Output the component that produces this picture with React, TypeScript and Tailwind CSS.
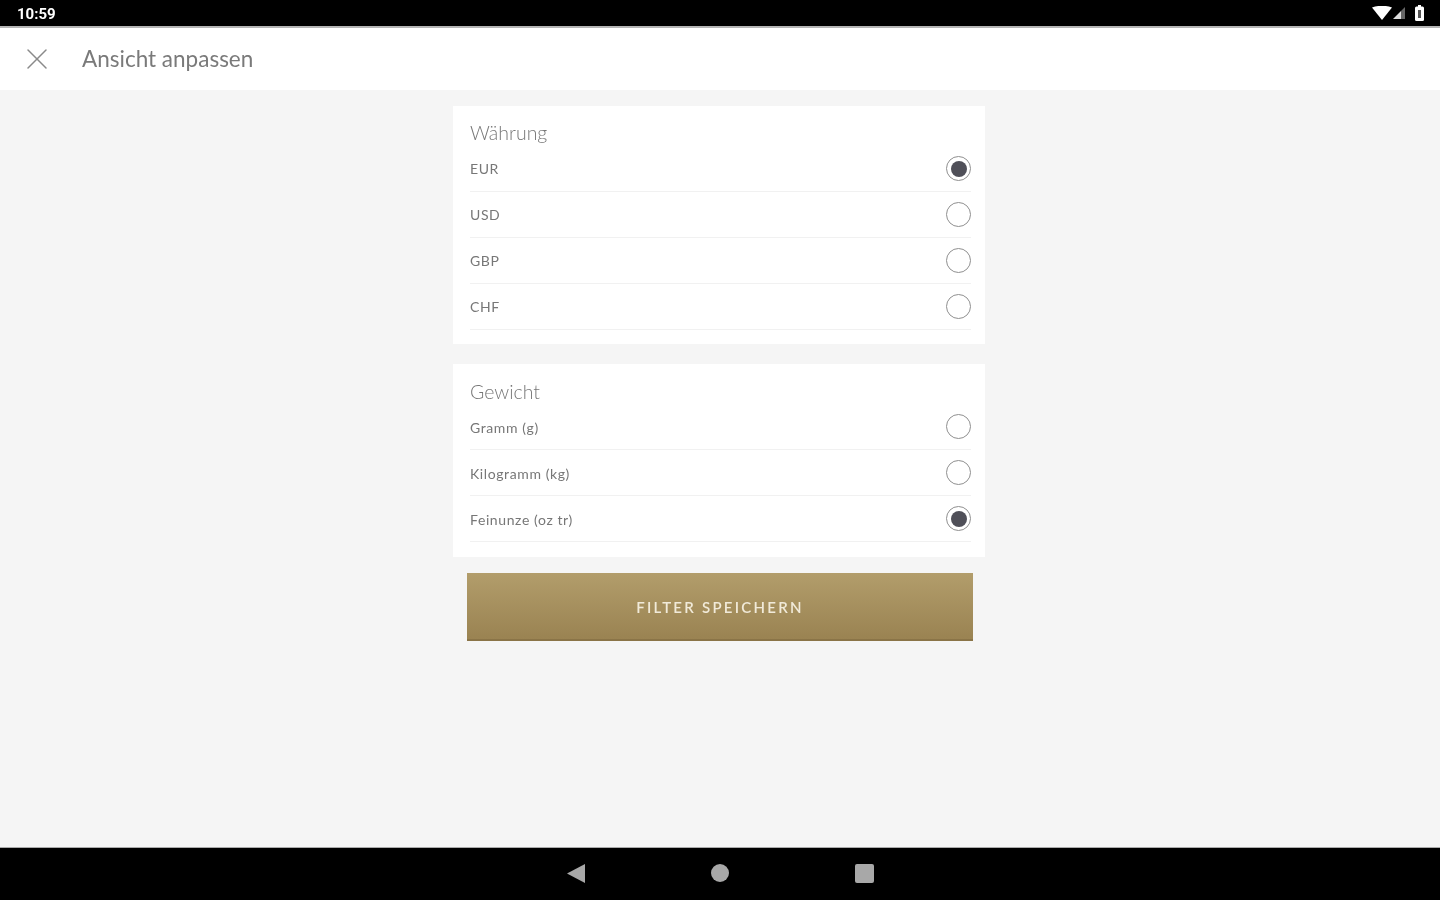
import React from 'react';
import { X } from 'lucide-react';

const Radio = ({ checked }: { checked?: boolean }) => (
    <div className="flex h-[25px] w-[25px] items-center justify-center rounded-full border-[1.5px] border-[#8f8f8f] blur-[0.3px]">
        {checked && <div className="h-[16px] w-[16px] rounded-full bg-[#4f4f58]" />}
    </div>
);

const Row = ({ label, checked, low }: { label: string; checked?: boolean; low?: boolean }) => (
    <div className="flex h-[46px] items-center justify-between border-b border-[#f1f1f1]">
        <span className={`text-[14px] tracking-[0.6px] text-[#777777] blur-[0.5px] ${low ? 'pt-[2px]' : ''}`}>{label}</span>
        <Radio checked={checked} />
    </div>
);

const Section = ({ title, rows, selected, last }: { title: string; rows: string[]; selected: string; last?: boolean }) => (
    <div className={`mr-[2px] w-[532px] bg-white pl-[17px] pr-[14px] ${last ? 'pb-[15px]' : 'pb-[14px]'}`}>
        <div className="flex h-[40px] items-end text-[19.5px] leading-[28px] font-light text-[#777777] blur-[0.5px]">
            <span className={last ? 'relative top-[2px]' : 'relative top-[1px]'}>{title}</span>
        </div>
        {rows.map((r) => (
            <Row key={r} label={r} checked={r === selected} low={last} />
        ))}
    </div>
);

const App: React.FC = () => {
    return (
        <div className="flex h-[900px] w-[1440px] flex-col overflow-hidden bg-[#f5f5f5] font-['Lato',sans-serif]">
            {/* Status bar */}
            <div className="flex h-[26px] items-center justify-between bg-black pl-[17px] pr-[16px]">
                <span className="relative top-[1px] font-['Roboto',sans-serif] text-[15px] font-bold text-white blur-[0.4px]">10:59</span>
                <div className="flex items-center gap-[1px] blur-[0.4px]">
                    <svg width="20" height="14" viewBox="0 0 20 14"><path d="M0 1.5 Q10 -2 20 1.5 L10 14 Z" fill="#fff" /></svg>
                    <svg width="13" height="12" viewBox="0 0 13 12"><path d="M0 12 L8 4 V12 Z" fill="#ddd" /><path d="M8 4 L12 0 V12 H8 Z" fill="#666" /></svg>
                    <svg className="ml-[8px]" width="9" height="16" viewBox="0 0 9 16"><rect x="0" y="1.5" width="9" height="14.5" rx="1.5" fill="#fff" /><rect x="3" y="0" width="3" height="2" fill="#fff" /><rect x="3" y="5" width="3" height="8" fill="#555" /></svg>
                </div>
            </div>

            {/* Header */}
            <div className="flex h-[64px] items-center border-t-2 border-[#b5b5b5] bg-white">
                <X className="ml-[19px] h-[36px] w-[36px] text-[#8a8a8a]" strokeWidth={1} />
                <span className="ml-[27px] text-[22.5px] text-[#7a7a7a] blur-[0.5px]">Ansicht anpassen</span>
            </div>

            {/* Content */}
            <div className="flex flex-1 flex-col items-center pt-[16px]">
                <Section title="Währung" rows={['EUR', 'USD', 'GBP', 'CHF']} selected="EUR" />
                <div className="h-[20px]" />
                <Section title="Gewicht" rows={['Gramm (g)', 'Kilogramm (kg)', 'Feinunze (oz tr)']} selected="Feinunze (oz tr)" last />
                <button className="mt-[16px] flex h-[68px] w-[506px] items-center justify-center border-b-2 border-[#8a7447] bg-gradient-to-b from-[#b29d6b] to-[#9a8352] pt-[2px] text-[15px] font-semibold tracking-[0.15em] text-[#f1ead9]">
                    <span className="blur-[0.4px]">FILTER SPEICHERN</span>
                </button>
            </div>

            {/* Nav bar */}
            <div className="flex h-[53px] items-center justify-center gap-[126px] border-t border-[#aaaaaa] bg-black pb-[2px]">
                <svg className="blur-[0.4px]" width="18" height="19" viewBox="0 0 18 19"><path d="M0 9.5 L18 0 V19 Z" fill="#a8a8a8" /></svg>
                <div className="h-[18px] w-[18px] rounded-full bg-[#a8a8a8] blur-[0.4px]" />
                <div className="h-[19px] w-[19px] rounded-[2px] bg-[#a8a8a8] blur-[0.4px]" />
            </div>
        </div>
    );
};

export default App;
